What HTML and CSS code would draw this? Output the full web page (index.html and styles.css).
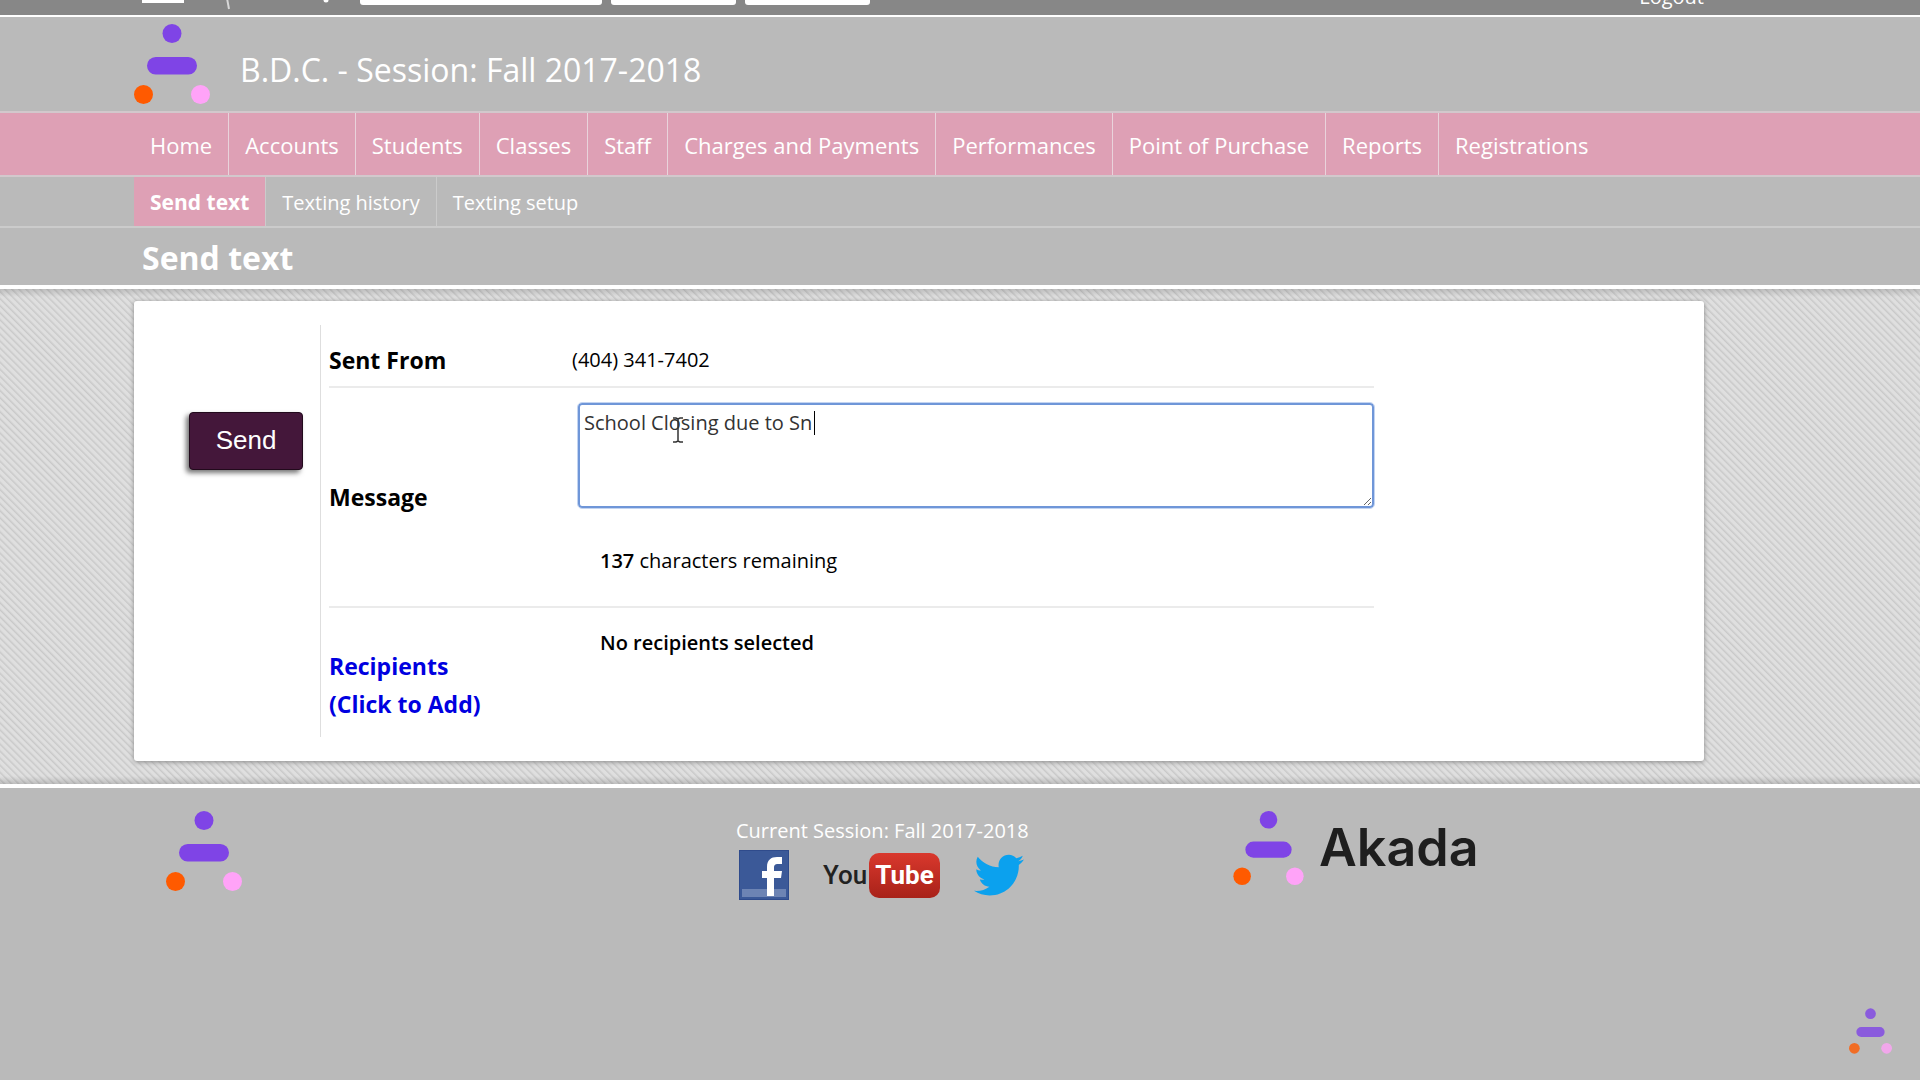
FILE: index.html
```html
<!DOCTYPE html>
<html lang="en">
<head>
    <meta charset="UTF-8">
    <meta name="viewport" content="width=device-width, initial-scale=1.0">
    <title>Send text</title>
    <link rel="stylesheet" href="styles.css">
</head>
<body>

    <!-- Shared logo mark -->
    <svg class="symbols" aria-hidden="true">
        <symbol id="mark" viewBox="0 0 76 80">
            <circle cx="38" cy="9.5" r="9.5" fill="#7f44e6"/>
            <rect x="13" y="33" width="50" height="17.5" rx="8.7" fill="#7f44e6"/>
            <circle cx="9.5" cy="70.5" r="9.5" fill="#ff5a00"/>
            <circle cx="66.5" cy="70.5" r="9.5" fill="#ffa3f8"/>
        </symbol>
    </svg>

    <div class="topbar wrap">
        <svg class="topbar-icons" viewBox="0 0 218 30" aria-hidden="true">
            <rect x="8" y="0" width="42" height="18" fill="#fff"/>
            <path d="M92 8l3 16" stroke="#d8d8d8" stroke-width="2"/>
            <circle cx="192" cy="15" r="2.5" fill="#fff"/>
        </svg>
        <input class="top-search" type="text" aria-label="Search">
        <button class="top-button" type="button" aria-label="Find account"></button>
        <button class="top-button" type="button" aria-label="Find student"></button>
        <a class="logout" href="#">Logout</a>
    </div>

    <header class="header wrap">
        <svg class="logo"><use href="#mark"/></svg>
        <h1>B.D.C. - Session: Fall 2017-2018</h1>
    </header>

    <nav class="nav wrap">
        <a href="#">Home</a>
        <a href="#">Accounts</a>
        <a href="#">Students</a>
        <a href="#">Classes</a>
        <a href="#">Staff</a>
        <a href="#">Charges and Payments</a>
        <a href="#">Performances</a>
        <a href="#">Point of Purchase</a>
        <a href="#">Reports</a>
        <a href="#">Registrations</a>
    </nav>

    <nav class="subnav wrap">
        <a class="active" href="#">Send text</a>
        <a href="#">Texting history</a>
        <a href="#">Texting setup</a>
    </nav>

    <div class="page-title wrap">
        <h2>Send text</h2>
    </div>

    <main class="main wrap">
        <form class="card">
            <div class="actions">
                <button class="send" type="button">Send</button>
            </div>
            <div class="fields">
                <div class="row row-from">
                    <div class="label">Sent From</div>
                    <div class="value">(404) 341-7402</div>
                </div>
                <div class="row row-message">
                    <label class="label" for="message">Message</label>
                    <div class="value">
                        <div class="message-box">
                            <textarea id="message" spellcheck="false">School Closing due to Sn</textarea>
                            <span class="caret"></span>
                            <svg class="pointer" viewBox="0 0 12 26" aria-hidden="true">
                                <path d="M1 1h3l2 1 2-1h3M6 2v22M1 25h3l2-1 2 1h3" fill="none" stroke="#333" stroke-width="1.500"/>
                            </svg>
                        </div>
                        <p class="note"><b>137</b> characters remaining</p>
                    </div>
                </div>
                <div class="row row-recipients">
                    <a class="label" href="#">Recipients<br>(Click to Add)</a>
                    <div class="value">
                        <p class="note"><b>No recipients selected</b></p>
                    </div>
                </div>
            </div>
        </form>
    </main>

    <footer class="footer wrap">
        <div class="footer-logo">
            <svg class="logo"><use href="#mark"/></svg>
        </div>
        <div class="footer-session">
            <p>Current Session: Fall 2017-2018</p>
            <div class="social">
                <a href="#" aria-label="Facebook">
                    <svg width="50" height="50" viewBox="0 0 50 50">
                        <rect width="50" height="50" fill="#2f4b8c"/>
                        <rect x="1" y="1" width="48" height="48" fill="#3b5998"/>
                        <rect x="3" y="39" width="44" height="8" fill="#6d84b4"/>
                        <path d="M28 46V28h-5v-7h5v-4c0-7 4-10 10-10h5v7h-4c-3 0-4 1-4 4v3h8l-1 7h-7v18z" fill="#fff"/>
                    </svg>
                </a>
                <a class="youtube" href="#" aria-label="YouTube">
                    <span>You</span><span class="tube">Tube</span>
                </a>
                <a href="#" aria-label="Twitter">
                    <svg width="50" height="42" viewBox="0 2 24 20">
                        <path d="M24 4.6c-.9.4-1.800.7-2.800.8 1-.6 1.800-1.600 2.200-2.700-1 .6-2 1-3.100 1.200-.9-1-2.200-1.600-3.600-1.600-3.200 0-5.500 3-4.800 6-4.100-.2-7.700-2.100-10.100-5.100-1.300 2.200-.7 5.100 1.500 6.600-.8 0-1.600-.2-2.200-.6-.1 2.300 1.600 4.400 3.900 4.900-.7.2-1.500.2-2.200.1.600 2 2.400 3.400 4.600 3.400-2.100 1.600-4.700 2.300-7.400 2 2.200 1.400 4.800 2.200 7.500 2.200 9.100 0 14.300-7.700 14-14.600 1-.7 1.800-1.600 2.500-2.600z" fill="#0ba1ee"/>
                    </svg>
                </a>
            </div>
        </div>
        <div class="akada">
            <svg class="logo-small"><use href="#mark"/></svg>
            <span>Akada</span>
        </div>
    </footer>

    <svg class="watermark" aria-hidden="true"><use href="#mark"/></svg>

</body>
</html>
```

FILE: styles.css
```css
* {
    box-sizing: border-box;
}

body {
    margin: 0;
    min-height: 100vh;
    display: flex;
    flex-direction: column;
    font-family: "Open Sans", "Noto Sans", sans-serif;
    font-size: 20px;
    color: #000;
    background: #bababa;
}

h1, h2, p {
    margin: 0;
}

a {
    text-decoration: none;
}

.symbols {
    display: none;
}

.wrap {
    padding-left: 134px;
    padding-right: 216px;
}

/* Top bar, only its lower edge shows */
.topbar {
    display: flex;
    align-items: flex-end;
    height: 17px;
    overflow: hidden;
    background: #878787;
    border-bottom: 2px solid #fff;
}

.topbar-icons {
    flex: none;
    width: 218px;
    height: 30px;
    margin-right: 8px;
}

.top-search,
.top-button {
    flex: none;
    height: 30px;
    margin: 0 9px 10px 0;
    padding: 0;
    border: none;
    border-radius: 3px;
    background: #fff;
}

.top-search {
    width: 242px;
}

.top-button {
    width: 125px;
}

.logout {
    margin-left: auto;
    padding-bottom: 4px;
    line-height: 28px;
    color: #fff;
}

/* Header */
.header {
    display: flex;
    align-items: center;
    gap: 30px;
    height: 94px;
}

.logo {
    flex: none;
    width: 76px;
    height: 80px;
}

.header h1 {
    padding-top: 10px;
    font-size: 32px;
    font-weight: 400;
    color: #fff;
}

.nav {
    display: flex;
    background: #dea0b5;
    border-top: 2px solid #d2c8cc;
    border-bottom: 2px solid #d2c8cc;
}

.nav a,
.subnav a {
    padding: 2px 16px 0;
    border-right: 1px solid #e9d3db;
    color: #fff;
    white-space: nowrap;
}

.nav a {
    font-size: 22px;
    line-height: 60px;
}

.nav a:last-child,
.subnav a:last-child {
    border-right: none;
}

.subnav {
    display: flex;
    border-bottom: 2px solid #cbcbcb;
}

.subnav a {
    font-size: 20px;
    line-height: 47px;
    border-right-color: #cbcbcb;
}

.subnav .active {
    background: #dea0b5;
    font-size: 21px;
    font-weight: 700;
}

.page-title {
    border-bottom: 4px solid #fff;
}

.page-title h2 {
    padding: 2px 0 0 8px;
    font-size: 32px;
    line-height: 55px;
    color: #fff;
}

/* Striped area with the form */
.main {
    padding-top: 12px;
    padding-bottom: 23px;
    background:
        linear-gradient(rgba(0, 0, 0, 0.15), transparent 8px, transparent calc(100% - 8px), rgba(0, 0, 0, 0.15)),
        repeating-linear-gradient(45deg, #dfdfdf 0, #dfdfdf 2px, #c9c9c9 3px, #dfdfdf 5px);
}

.card {
    display: flex;
    padding: 24px 0;
    border-radius: 3px;
    background: #fff;
    box-shadow: 0 1px 5px #888;
}

.actions {
    flex: none;
    width: 186px;
    padding: 87px 17px 0 0;
    text-align: right;
}

.send {
    width: 114px;
    height: 58px;
    padding: 0 0 2px;
    border: 1px solid #220a1c;
    border-radius: 4px;
    background: #44173a;
    box-shadow: -3px 3px 5px #777;
    color: #fff;
    font-family: "Liberation Sans", Arial, sans-serif;
    font-size: 26px;
}

.fields {
    flex: 0 1 1054px;
    padding-left: 8px;
    border-left: 1px solid #dedede;
}

.row {
    display: flex;
    align-items: center;
}

.row-from {
    height: 63px;
    padding-top: 8px;
    border-bottom: 2px solid #ebebeb;
}

.row-message {
    height: 220px;
    border-bottom: 2px solid #ebebeb;
}

.row-recipients {
    height: 129px;
    padding-top: 24px;
}

.label {
    flex: none;
    width: 243px;
    font-size: 23px;
    font-weight: 700;
    line-height: 38px;
    color: #000;
}

a.label {
    color: #0000e0;
}

.value {
    flex: 1;
    line-height: 28px;
}

.row-message .value,
.row-recipients .value {
    align-self: stretch;
}

.message-box {
    position: relative;
    margin: 15px 0 0 6px;
}

textarea {
    display: block;
    width: 100%;
    height: 105px;
    padding: 4px;
    border: 2px solid #6f96d8;
    border-radius: 4px;
    outline: 1px solid #c3d4f1;
    font-family: inherit;
    font-size: 20px;
    line-height: 28px;
    color: #333;
}

.caret {
    position: absolute;
    left: 236px;
    top: 8px;
    width: 1px;
    height: 24px;
    background: #000;
}

.pointer {
    position: absolute;
    left: 94px;
    top: 14px;
    width: 12px;
    height: 26px;
}

.note {
    padding-left: 28px;
}

.row-message .note {
    margin-top: 39px;
}

.row-recipients .note {
    margin-top: -3px;
}

.note b {
    font-weight: 600;
}

/* Footer */
.footer {
    flex: 1;
    display: grid;
    grid-template-columns: 602fr 497fr 471fr;
    align-items: start;
    padding-top: 23px;
    border-top: 4px solid #fff;
}

.footer-logo {
    padding-left: 32px;
}

.footer-session p {
    padding-top: 6px;
    line-height: 28px;
    color: #fff;
}

.social {
    display: flex;
    align-items: center;
    gap: 34px;
    padding: 5px 0 0 3px;
}

.social svg {
    display: block;
}

.youtube {
    display: flex;
    align-items: center;
    gap: 2px;
    font-family: Roboto, sans-serif;
    font-size: 26px;
    font-weight: 500;
    line-height: 45px;
    color: #222;
}

.tube {
    padding: 0 6px;
    border-radius: 10px;
    background: linear-gradient(#d9382d, #a82219);
    color: #fff;
    font-weight: 700;
}

.akada {
    display: flex;
    align-items: center;
    gap: 15px;
    font-family: Inter, sans-serif;
    font-size: 52px;
    font-weight: 600;
    line-height: 74px;
    color: #1e1e1e;
}

.logo-small {
    flex: none;
    width: 71px;
    height: 74px;
}

.watermark {
    position: fixed;
    right: 28px;
    bottom: 26px;
    width: 43px;
    height: 46px;
    opacity: 0.8;
}
```
